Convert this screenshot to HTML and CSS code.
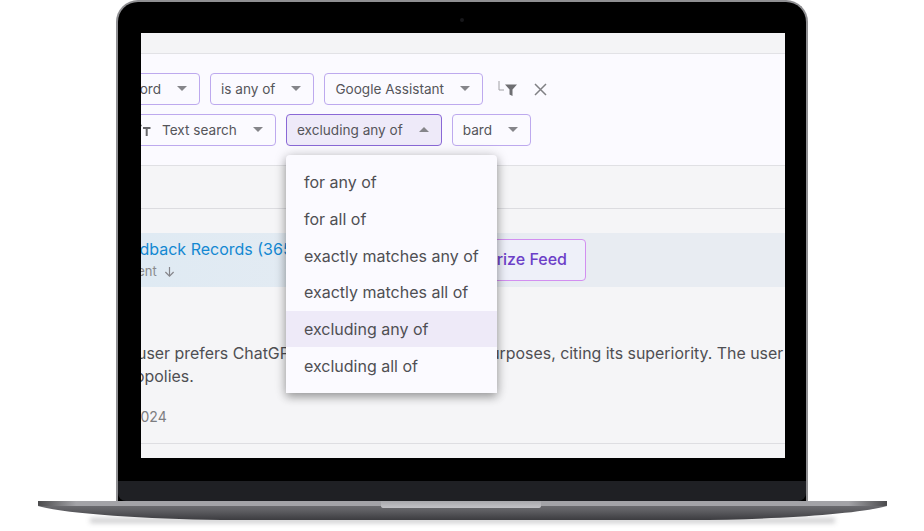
FILE: index.html
```html
<!DOCTYPE html>
<html lang="en">
<head>
<meta charset="utf-8">
<title>Feedback filter</title>
<link rel="stylesheet" href="styles.css">
</head>
<body>
<main class="stage">
  <div class="lid">
    <div class="bezel-top"><span class="camera"></span></div>
    <div class="screen">
      <div class="top-band"></div>
      <section class="filters">
        <div class="filter-row">
          <button class="chip chip-field">Keyword <svg class="caret" viewBox="0 0 10 5"><path d="M0 0h10L5 5z"/></svg></button>
          <button class="chip">is any of <svg class="caret" viewBox="0 0 10 5"><path d="M0 0h10L5 5z"/></svg></button>
          <button class="chip">Google Assistant <svg class="caret" viewBox="0 0 10 5"><path d="M0 0h10L5 5z"/></svg></button>
          <svg class="icon-filter" viewBox="0 0 20 16"><path d="M1 0v9h5" fill="none" stroke="#a0a0a4" stroke-width="1"/><path d="M7 3.500h12l-4.500 5V15l-3-1.500v-5z" fill="#6e6e72"/></svg>
          <svg class="icon-close" viewBox="0 0 13 13"><path d="M1 1l11 11M12 1L1 12" fill="none" stroke="#808084" stroke-width="1.500"/></svg>
        </div>
        <div class="filter-row">
          <button class="chip chip-text"><svg class="icon-type" viewBox="0 0 16 12"><path d="M0 1.500h7M3.500 1.500V5" fill="none" stroke="#8a8a8e" stroke-width="1.500"/><path d="M8 4h7.500M11.700 4v8" fill="none" stroke="#66666a" stroke-width="2"/></svg>Text search <svg class="caret" viewBox="0 0 10 5"><path d="M0 0h10L5 5z"/></svg></button>
          <button class="chip chip-open">excluding any of <svg class="caret" viewBox="0 0 10 5"><path d="M0 5h10L5 0z"/></svg></button>
          <button class="chip">bard <svg class="caret" viewBox="0 0 10 5"><path d="M0 0h10L5 5z"/></svg></button>
        </div>
      </section>
      <div class="sub-band"></div>
      <section class="feed">
        <div class="feed-head">
          <div class="feed-title">
            <h2 class="feed-name">Feedback Records (365)</h2>
            <p class="feed-sort">Recent <svg class="icon-down" viewBox="0 0 12 12"><path d="M6 1v10M1.500 6.500L6 11l4.500-4.500" fill="none" stroke="#85858a" stroke-width="1.300"/></svg></p>
          </div>
          <button class="summarize">Summarize Feed</button>
        </div>
        <div class="feed-body">
          <p class="line line-first">user prefers ChatGPT to Google Assistant for purposes, citing its superiority. The user</p>
          <p class="line line-second">opolies.</p>
          <p class="date">2024</p>
        </div>
      </section>
      <div class="end-band"></div>
      <ul class="menu">
        <li class="menu-item">for any of</li>
        <li class="menu-item">for all of</li>
        <li class="menu-item">exactly matches any of</li>
        <li class="menu-item">exactly matches all of</li>
        <li class="menu-item is-active">excluding any of</li>
        <li class="menu-item">excluding all of</li>
      </ul>
    </div>
    <div class="bezel-bottom"></div>
    <div class="hinge"></div>
  </div>
  <svg class="base" viewBox="0 0 924 30" aria-hidden="true">
    <defs>
      <linearGradient id="body" x1="0" y1="0" x2="0" y2="1">
        <stop offset="0" stop-color="#77777b"/><stop offset="0.45" stop-color="#626266"/><stop offset="1" stop-color="#3c3c40"/>
      </linearGradient>
      <linearGradient id="strip" x1="0" y1="0" x2="1" y2="0">
        <stop offset="0" stop-color="#4a4a4c"/><stop offset="0.045" stop-color="#a3a3a7"/><stop offset="0.955" stop-color="#a3a3a7"/><stop offset="1" stop-color="#4a4a4c"/>
      </linearGradient>
      <linearGradient id="notch" x1="0" y1="0" x2="0" y2="1">
        <stop offset="0" stop-color="#a8a8ac"/><stop offset="1" stop-color="#c2c2c6"/>
      </linearGradient>
      <filter id="soft" x="-5%" y="-200%" width="110%" height="500%"><feGaussianBlur stdDeviation="2.500"/></filter>
    </defs>
    <path d="M90 17H835V22H90z" fill="#8e8e92" opacity="0.45" filter="url(#soft)"/>
    <path d="M38 0H887V5C860 13 770 19 690 19H235C155 19 65 13 38 5z" fill="url(#body)"/>
    <path d="M38 0H887V4.500L885 5H40L38 4.500z" fill="url(#strip)"/>
    <path d="M381 0H541V5Q541 7 538 7H384Q381 7 381 5z" fill="url(#notch)"/>
  </svg>
</main>
</body>
</html>
```
FILE: styles.css
```css
* { box-sizing: border-box; }
html, body { margin: 0; padding: 0; background: #fff; }
body { font-family: Inter, "Liberation Sans", sans-serif; color: #4a4a4e; }
.stage { width: 924px; height: 531px; overflow: hidden; display: flex; flex-direction: column; align-items: center; }

.lid { width: 692px; height: 501px; flex: none; background: #000; border: 2px solid #8f8f92; border-bottom: 0; border-radius: 22px 22px 0 0; display: flex; flex-direction: column; align-items: flex-start; }
.bezel-top { width: 100%; height: 31px; flex: none; display: flex; justify-content: center; padding-top: 16px; }
.camera { width: 4px; height: 4px; border-radius: 50%; background: #17171a; margin-left: -1px; }
.screen { position: relative; width: 644px; height: 425px; margin-left: 23px; flex: none; overflow: hidden; background: #f5f5f7; display: flex; flex-direction: column; }
.bezel-bottom { height: 23px; flex: none; }
.hinge { width: 100%; height: 20px; flex: none; background: #1f2024; border-radius: 0 0 8px 8px; }

.top-band { height: 21px; flex: none; background: #f4f4f6; border-bottom: 1px solid #e2e2e6; }
.filters { height: 112px; flex: none; background: #fbfaff; border-bottom: 1px solid #e0e0e4; padding-top: 19px; display: flex; flex-direction: column; gap: 9px; }
.filter-row { display: flex; align-items: center; gap: 10px; height: 32px; }
.chip { height: 32px; flex: none; display: flex; align-items: center; justify-content: space-between; gap: 16px; padding: 0 12px 1px 10px; background: #fbfaff; border: 1px solid #bda9ee; border-radius: 4px; font: 400 13.600px Inter, sans-serif; color: #55555a; }
.chip-field { margin-left: -20px; width: 79px; justify-content: flex-end; }
.chip-text { margin-left: -32px; width: 167px; justify-content: flex-start; }
.chip-text .caret { margin-left: auto; }
.chip-open { background: #eeeaf9; border-color: #8a68d6; }
.icon-type { width: 16px; height: 12px; flex: none; margin-right: -5px; margin-left: 15px; margin-top: 1px; }
.caret { width: 10px; height: 5px; flex: none; fill: #85858a; }
.icon-filter { width: 20px; height: 16px; flex: none; margin-left: 5px; }
.icon-close { width: 13px; height: 13px; flex: none; margin-left: 6px; }

.sub-band { height: 43px; flex: none; background: #f5f5f7; border-bottom: 1px solid #dcdce0; }
.feed { height: 235px; flex: none; padding-top: 24px; border-bottom: 1px solid #dedee2; display: flex; flex-direction: column; }
.feed-head { height: 54px; flex: none; display: flex; align-items: center; background: linear-gradient(90deg, #dfeaf3, #e8ecf2 60%, #e8ecf2); }
.feed-title { margin: -1px 0 0 -29px; flex: none; display: flex; flex-direction: column; width: 260px; }
.feed-name { margin: 0; font-size: 16px; line-height: 20px; font-weight: 400; color: #1488d2; white-space: nowrap; }
.feed-sort { margin: 3px 0 0 2px; font-size: 13px; line-height: 18px; color: #8a8a8e; white-space: nowrap; display: flex; align-items: center; gap: 7px; }
.icon-down { width: 11px; height: 11px; }
.summarize { margin-left: auto; margin-right: 199px; height: 42px; padding: 0 18px 2px; background: #eef0f9; border: 1px solid #d28ff0; border-radius: 4px; font: 500 16px Inter, sans-serif; color: #6c3fc8; white-space: nowrap; }

.feed-body { padding-top: 55px; display: flex; flex-direction: column; }
.line { margin: 0; font-size: 15.900px; line-height: 23px; color: #4f4f53; white-space: nowrap; }
.line-first { margin-left: -4px; }
.line-second { margin-left: -6px; }
.date { margin: 20px 0 0 -9px; font-size: 14px; line-height: 18px; color: #7d7d81; }
.end-band { flex: 1; }

.menu { position: absolute; left: 145px; top: 122px; width: 211px; height: 238px; margin: 0; padding: 9px 0; list-style: none; background: #fbfaff; border-radius: 4px 4px 0 0; box-shadow: 0 4px 10px rgba(0,0,0,.32), 0 0 14px rgba(0,0,0,.14); }
.menu-item { height: 36.700px; padding: 0 18px; display: flex; align-items: center; font-size: 16px; color: #4f4f53; white-space: nowrap; }
.is-active { background: #eeeaf8; }

.base { width: 924px; height: 30px; flex: none; display: block; }
```
